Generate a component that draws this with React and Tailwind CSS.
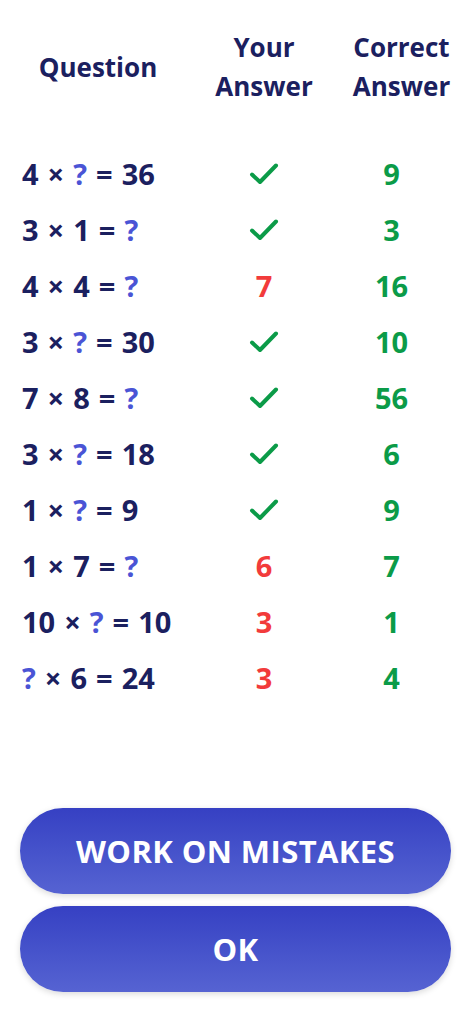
import React from "react";

const rows = [
    { q: ["4", "×", "?", "=", "36"], mine: null, correct: "9" },
    { q: ["3", "×", "1", "=", "?"], mine: null, correct: "3" },
    { q: ["4", "×", "4", "=", "?"], mine: "7", correct: "16" },
    { q: ["3", "×", "?", "=", "30"], mine: null, correct: "10" },
    { q: ["7", "×", "8", "=", "?"], mine: null, correct: "56" },
    { q: ["3", "×", "?", "=", "18"], mine: null, correct: "6" },
    { q: ["1", "×", "?", "=", "9"], mine: null, correct: "9" },
    { q: ["1", "×", "7", "=", "?"], mine: "6", correct: "7" },
    { q: ["10", "×", "?", "=", "10"], mine: "3", correct: "1" },
    { q: ["?", "×", "6", "=", "24"], mine: "3", correct: "4" },
];

const Check = () => (
    <svg width="30" height="24" viewBox="0 0 30 24" fill="none">
        <path
            d="M3 12.5 L11 20 L27 3.5"
            stroke="#0b9b48"
            strokeWidth="4"
            strokeLinecap="round"
            strokeLinejoin="round"
        />
    </svg>
);

const App = () => {
    return (
        <div
            className="min-h-screen w-[471px] bg-white flex flex-col text-[#1b205f]"
            style={{ fontFamily: "'Open Sans', 'Noto Sans', sans-serif" }}>
            <div className="flex items-center pt-[28px] text-[26px] leading-[39px] font-bold">
                <div className="w-[196px] text-center">Question</div>
                <div className="w-[136px] text-center">
                    Your
                    <br />
                    Answer
                </div>
                <div className="w-[139px] text-center">
                    Correct
                    <br />
                    Answer
                </div>
            </div>

            <div className="mt-[40px] flex flex-col">
                {rows.map((row, index) => (
                    <div key={index} className="flex items-center h-[56px] text-[29px] font-bold">
                        <div className="w-[196px] pl-[22px] flex gap-[9px]">
                            {row.q.map((part, i) => (
                                <span key={i} className={part === "?" ? "text-[#4a54d5]" : ""}>
                                    {part}
                                </span>
                            ))}
                        </div>
                        <div className="w-[136px] flex justify-center">
                            {row.mine ? (
                                <span className="text-[#f23b3b]">{row.mine}</span>
                            ) : (
                                <Check />
                            )}
                        </div>
                        <div className="w-[139px] pr-[20px] text-center text-[#0b9b48]">
                            {row.correct}
                        </div>
                    </div>
                ))}
            </div>

            <div className="mt-auto flex flex-col gap-[12px] px-[20px] pb-[32px]">
                <button className="h-[86px] w-full rounded-full bg-gradient-to-b from-[#3640c3] to-[#5663d2] text-white text-[31px] tracking-[0.4px] font-bold shadow-[0_2px_6px_rgba(0,0,0,0.15)]">
                    WORK ON MISTAKES
                </button>
                <button className="h-[86px] w-full rounded-full bg-gradient-to-b from-[#3640c3] to-[#5663d2] text-white text-[31px] tracking-[0.4px] font-bold shadow-[0_2px_6px_rgba(0,0,0,0.15)]">
                    OK
                </button>
            </div>
        </div>
    );
};

export default App;
